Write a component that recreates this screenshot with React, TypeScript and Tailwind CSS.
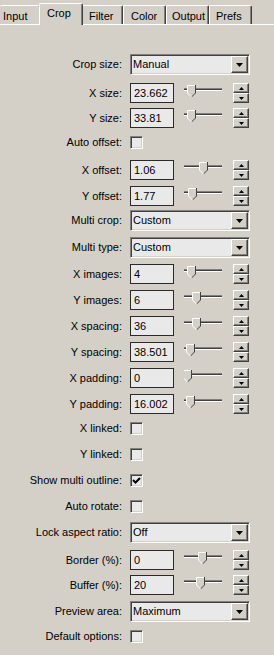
import React from 'react';

type Row =
    | { kind: 'select'; label: string; value: string; mt: string }
    | { kind: 'number'; label: string; value: string; thumb: number; mt: string }
    | { kind: 'check'; label: string; checked?: boolean; mt: string };

const rows: Row[] = [
    { kind: 'select', label: 'Crop size:', value: 'Manual', mt: 'mt-0' },
    { kind: 'number', label: 'X size:', value: '23.662', thumb: 7, mt: 'mt-[8px]' },
    { kind: 'number', label: 'Y size:', value: '33.81', thumb: 7, mt: 'mt-[5px]' },
    { kind: 'check', label: 'Auto offset:', mt: 'mt-[8px]' },
    { kind: 'number', label: 'X offset:', value: '1.06', thumb: 19, mt: 'mt-[11px]' },
    { kind: 'number', label: 'Y offset:', value: '1.77', thumb: 8, mt: 'mt-[6px]' },
    { kind: 'select', label: 'Multi crop:', value: 'Custom', mt: 'mt-[4px]' },
    { kind: 'select', label: 'Multi type:', value: 'Custom', mt: 'mt-[6px]' },
    { kind: 'number', label: 'X images:', value: '4', thumb: 7, mt: 'mt-[6px]' },
    { kind: 'number', label: 'Y images:', value: '6', thumb: 12, mt: 'mt-[6px]' },
    { kind: 'number', label: 'X spacing:', value: '36', thumb: 12, mt: 'mt-[6px]' },
    { kind: 'number', label: 'Y spacing:', value: '38.501', thumb: 6, mt: 'mt-[6px]' },
    { kind: 'number', label: 'X padding:', value: '0', thumb: 3, mt: 'mt-[6px]' },
    { kind: 'number', label: 'Y padding:', value: '16.002', thumb: 6, mt: 'mt-[6px]' },
    { kind: 'check', label: 'X linked:', mt: 'mt-[8px]' },
    { kind: 'check', label: 'Y linked:', mt: 'mt-[13px]' },
    { kind: 'check', label: 'Show multi outline:', checked: true, mt: 'mt-[13px]' },
    { kind: 'check', label: 'Auto rotate:', mt: 'mt-[13px]' },
    { kind: 'select', label: 'Lock aspect ratio:', value: 'Off', mt: 'mt-[9px]' },
    { kind: 'number', label: 'Border (%):', value: '0', thumb: 18, mt: 'mt-[7px]' },
    { kind: 'number', label: 'Buffer (%):', value: '20', thumb: 16, mt: 'mt-[5px]' },
    { kind: 'select', label: 'Preview area:', value: 'Maximum', mt: 'mt-[6px]' },
    { kind: 'check', label: 'Default options:', mt: 'mt-[8px]' },
];

const tabs = [
    { name: 'Input', cls: 'w-[41px] pl-[3px] border-l-0' },
    { name: 'Crop', cls: 'w-[40px] pl-[5px]' },
    { name: 'Filter', cls: 'w-[42px] pl-[7px]' },
    { name: 'Color', cls: 'w-[43px] pl-[7px]' },
    { name: 'Output', cls: 'w-[43px] pl-[5px]' },
    { name: 'Prefs', cls: 'w-[43px] pl-[6px]' },
];

const raised =
    'border border-t-white border-l-white border-b-[#404040] border-r-[#404040] shadow-[inset_-1px_-1px_0_#808080]';

const Slider = ({ pos }: { pos: number }) => {
    const x = pos - 4;
    return (
        <svg width="38" height="20" className="ml-[10px] shrink-0">
            <rect x="0" y="5" width="38" height="1" fill="#808080" />
            <rect x="0" y="6" width="38" height="1" fill="#404040" />
            <rect x="0" y="7" width="38" height="1" fill="#ffffff" />
            <polygon
                points={`${x},2 ${x + 8},2 ${x + 8},10 ${x + 4},14 ${x},10`}
                fill="#d4d0c8"
            />
            <polyline
                points={`${x + 0.5},10 ${x + 0.5},2.5 ${x + 8},2.5`}
                fill="none"
                stroke="#ffffff"
            />
            <polyline
                points={`${x + 8.5},2 ${x + 8.5},10 ${x + 4.5},14`}
                fill="none"
                stroke="#404040"
            />
            <line x1={x + 0.5} y1="10" x2={x + 4.5} y2="14" stroke="#ffffff" />
        </svg>
    );
};

const Spinner = () => (
    <div className="ml-[11px] flex h-[20px] w-[16px] shrink-0 flex-col">
        <div className={`flex h-[10px] items-center justify-center bg-[#d4d0c8] ${raised}`}>
            <svg width="5" height="3">
                <polygon points="2.5,0 5,3 0,3" fill="#000" />
            </svg>
        </div>
        <div className={`flex h-[10px] items-center justify-center bg-[#d4d0c8] ${raised}`}>
            <svg width="5" height="3">
                <polygon points="0,0 5,0 2.5,3" fill="#000" />
            </svg>
        </div>
    </div>
);

const Select = ({ value }: { value: string }) => (
    <div className="flex h-[21px] w-[120px] items-center border border-t-[#808080] border-l-[#808080] border-b-white border-r-white bg-[#e9e9e9] shadow-[inset_1px_1px_0_#404040,inset_-1px_-1px_0_#d4d0c8]">
        <span className="flex-1 pl-[2px]">{value}</span>
        <div className={`mr-[1px] flex h-[17px] w-[17px] items-center justify-center bg-[#d4d0c8] ${raised}`}>
            <svg width="7" height="4">
                <polygon points="0,0 7,0 3.5,4" fill="#000" />
            </svg>
        </div>
    </div>
);

const Check = ({ checked }: { checked?: boolean }) => (
    <div className="flex h-[13px] w-[13px] items-center justify-center border border-t-[#808080] border-l-[#808080] border-b-white border-r-white bg-[#e9e9e9] shadow-[inset_1px_1px_0_#404040,inset_-1px_-1px_0_#d4d0c8]">
        {checked && (
            <svg width="9" height="9" viewBox="0 0 9 9">
                <polyline points="1,4 3.5,6.5 8,2" fill="none" stroke="#000" strokeWidth="2" />
            </svg>
        )}
    </div>
);

export default function App() {
    return (
        <div
            className="h-[655px] w-[274px] overflow-hidden bg-[#d4d0c8] text-[11px] leading-[13px] text-black"
            style={{ fontFamily: '"Liberation Sans", Arial, sans-serif' }}
        >
            {/* tab strip */}
            <div className="flex h-[24px] items-end">
                {tabs.map((t) =>
                    t.name === 'Crop' ? (
                        <div
                            key={t.name}
                            className="relative z-10 -mx-[2px] -mb-px flex h-[22px] w-[44px] items-start rounded-t-[2px] border-t border-l border-t-white border-l-white border-r border-r-[#404040] bg-[#d4d0c8] pt-[3px] pl-[7px] shadow-[inset_-1px_0_0_#808080]"
                        >
                            {t.name}
                        </div>
                    ) : (
                        <div
                            key={t.name}
                            className={`flex h-[19px] shrink-0 items-start rounded-t-[2px] border-t border-l border-t-white border-l-white border-r border-r-[#404040] pt-[4px] shadow-[inset_-1px_0_0_#808080] ${t.cls}`}
                        >
                            {t.name}
                        </div>
                    ),
                )}
            </div>

            {/* panel */}
            <div className="border-t border-white pt-[29px]">
                {rows.map((r) => (
                    <div key={r.label} className={`flex items-center ${r.mt}`}>
                        <div className="w-[122px] shrink-0 text-right whitespace-nowrap">{r.label}</div>
                        <div className="ml-[8px] flex items-center">
                            {r.kind === 'select' && <Select value={r.value} />}
                            {r.kind === 'check' && <Check checked={r.checked} />}
                            {r.kind === 'number' && (
                                <>
                                    <div className="flex h-[20px] w-[44px] items-center border border-[#2a2a2a] bg-[#e9e9e9] pl-[3px]">
                                        {r.value}
                                    </div>
                                    <Slider pos={r.thumb} />
                                    <Spinner />
                                </>
                            )}
                        </div>
                    </div>
                ))}
            </div>
        </div>
    );
}
